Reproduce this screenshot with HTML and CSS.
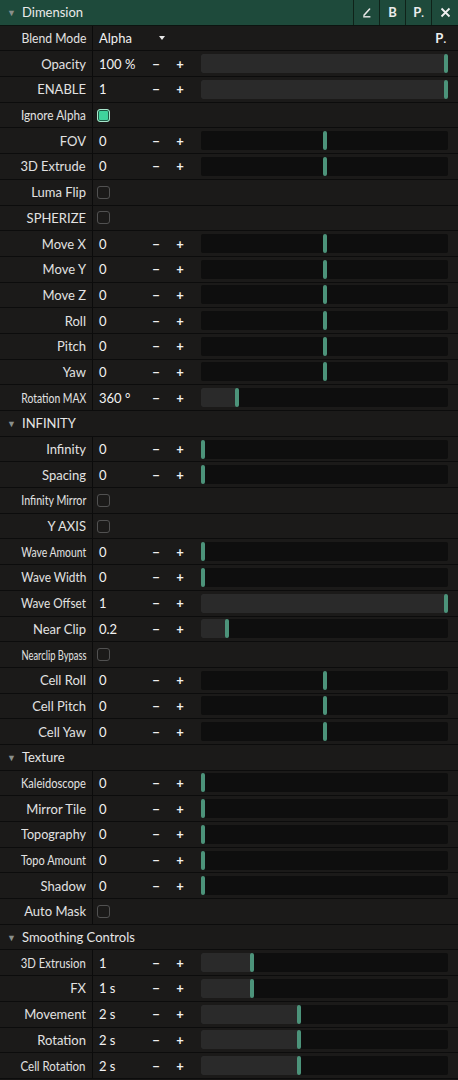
FILE: index.html
```html
<!DOCTYPE html>
<html>
<head>
<meta charset="utf-8">
<link rel="stylesheet" href="styles.css">
</head>
<body>
<div class="panel">
  <div class="hdr">
    <span class="tri">&#9660;</span><span class="hdr-title">Dimension</span>
    <div class="hbtns">
      <div class="hbtn"><svg width="12" height="12" viewBox="0 0 12 12"><path d="M3 9.2 L8.6 3" stroke="#e8e8e8" stroke-width="1.6" fill="none" stroke-linecap="round"/><path d="M2.2 10.8 H9.4" stroke="#e8e8e8" stroke-width="1.4"/></svg></div>
      <div class="hbtn">B</div>
      <div class="hbtn">P<span class="dot">.</span></div>
      <div class="hbtn"><svg width="11" height="11" viewBox="0 0 11 11"><path d="M1.5 1.5 L9.5 9.5 M9.5 1.5 L1.5 9.5" stroke="#f0f0f0" stroke-width="1.8"/></svg></div>
    </div>
  </div>

  <div class="row"><div class="lbl"><span>Blend Mode</span></div><div class="cell"><span class="v">Alpha</span><span class="dd"></span><span class="pp">P<span class="dot">.</span></span></div></div>

  <div class="row"><div class="lbl"><span>Opacity</span></div><div class="cell"><span class="v">100 %</span><span class="b">&minus;</span><span class="b">+</span><div class="trk" style="--p:1"><div class="fill"></div><div class="hdl"></div></div></div></div>
  <div class="row"><div class="lbl"><span>ENABLE</span></div><div class="cell"><span class="v">1</span><span class="b">&minus;</span><span class="b">+</span><div class="trk" style="--p:1"><div class="fill"></div><div class="hdl"></div></div></div></div>
  <div class="row"><div class="lbl"><span>Ignore Alpha</span></div><div class="cell"><span class="cb on"></span></div></div>
  <div class="row"><div class="lbl"><span>FOV</span></div><div class="cell"><span class="v">0</span><span class="b">&minus;</span><span class="b">+</span><div class="trk bi" style="--p:0.5"><div class="hdl"></div></div></div></div>
  <div class="row"><div class="lbl"><span>3D Extrude</span></div><div class="cell"><span class="v">0</span><span class="b">&minus;</span><span class="b">+</span><div class="trk bi" style="--p:0.5"><div class="hdl"></div></div></div></div>
  <div class="row"><div class="lbl"><span>Luma Flip</span></div><div class="cell"><span class="cb"></span></div></div>
  <div class="row"><div class="lbl"><span>SPHERIZE</span></div><div class="cell"><span class="cb"></span></div></div>
  <div class="row"><div class="lbl"><span>Move X</span></div><div class="cell"><span class="v">0</span><span class="b">&minus;</span><span class="b">+</span><div class="trk bi" style="--p:0.5"><div class="hdl"></div></div></div></div>
  <div class="row"><div class="lbl"><span>Move Y</span></div><div class="cell"><span class="v">0</span><span class="b">&minus;</span><span class="b">+</span><div class="trk bi" style="--p:0.5"><div class="hdl"></div></div></div></div>
  <div class="row"><div class="lbl"><span>Move Z</span></div><div class="cell"><span class="v">0</span><span class="b">&minus;</span><span class="b">+</span><div class="trk bi" style="--p:0.5"><div class="hdl"></div></div></div></div>
  <div class="row"><div class="lbl"><span>Roll</span></div><div class="cell"><span class="v">0</span><span class="b">&minus;</span><span class="b">+</span><div class="trk bi" style="--p:0.5"><div class="hdl"></div></div></div></div>
  <div class="row"><div class="lbl"><span>Pitch</span></div><div class="cell"><span class="v">0</span><span class="b">&minus;</span><span class="b">+</span><div class="trk bi" style="--p:0.5"><div class="hdl"></div></div></div></div>
  <div class="row"><div class="lbl"><span>Yaw</span></div><div class="cell"><span class="v">0</span><span class="b">&minus;</span><span class="b">+</span><div class="trk bi" style="--p:0.5"><div class="hdl"></div></div></div></div>
  <div class="row"><div class="lbl"><span>Rotation MAX</span></div><div class="cell"><span class="v">360 &deg;</span><span class="b">&minus;</span><span class="b">+</span><div class="trk" style="--p:0.14"><div class="fill"></div><div class="hdl"></div></div></div></div>

  <div class="sec"><span class="tri">&#9660;</span>INFINITY</div>
  <div class="row"><div class="lbl"><span>Infinity</span></div><div class="cell"><span class="v">0</span><span class="b">&minus;</span><span class="b">+</span><div class="trk" style="--p:0"><div class="fill"></div><div class="hdl"></div></div></div></div>
  <div class="row"><div class="lbl"><span>Spacing</span></div><div class="cell"><span class="v">0</span><span class="b">&minus;</span><span class="b">+</span><div class="trk" style="--p:0"><div class="fill"></div><div class="hdl"></div></div></div></div>
  <div class="row"><div class="lbl"><span>Infinity Mirror</span></div><div class="cell"><span class="cb"></span></div></div>
  <div class="row"><div class="lbl"><span>Y AXIS</span></div><div class="cell"><span class="cb"></span></div></div>
  <div class="row"><div class="lbl"><span>Wave Amount</span></div><div class="cell"><span class="v">0</span><span class="b">&minus;</span><span class="b">+</span><div class="trk" style="--p:0"><div class="fill"></div><div class="hdl"></div></div></div></div>
  <div class="row"><div class="lbl"><span>Wave Width</span></div><div class="cell"><span class="v">0</span><span class="b">&minus;</span><span class="b">+</span><div class="trk" style="--p:0"><div class="fill"></div><div class="hdl"></div></div></div></div>
  <div class="row"><div class="lbl"><span>Wave Offset</span></div><div class="cell"><span class="v">1</span><span class="b">&minus;</span><span class="b">+</span><div class="trk" style="--p:1"><div class="fill"></div><div class="hdl"></div></div></div></div>
  <div class="row"><div class="lbl"><span>Near Clip</span></div><div class="cell"><span class="v">0.2</span><span class="b">&minus;</span><span class="b">+</span><div class="trk" style="--p:0.1"><div class="fill"></div><div class="hdl"></div></div></div></div>
  <div class="row"><div class="lbl"><span>Nearclip Bypass</span></div><div class="cell"><span class="cb"></span></div></div>
  <div class="row"><div class="lbl"><span>Cell Roll</span></div><div class="cell"><span class="v">0</span><span class="b">&minus;</span><span class="b">+</span><div class="trk bi" style="--p:0.5"><div class="hdl"></div></div></div></div>
  <div class="row"><div class="lbl"><span>Cell Pitch</span></div><div class="cell"><span class="v">0</span><span class="b">&minus;</span><span class="b">+</span><div class="trk bi" style="--p:0.5"><div class="hdl"></div></div></div></div>
  <div class="row"><div class="lbl"><span>Cell Yaw</span></div><div class="cell"><span class="v">0</span><span class="b">&minus;</span><span class="b">+</span><div class="trk bi" style="--p:0.5"><div class="hdl"></div></div></div></div>

  <div class="sec"><span class="tri">&#9660;</span>Texture</div>
  <div class="row"><div class="lbl"><span>Kaleidoscope</span></div><div class="cell"><span class="v">0</span><span class="b">&minus;</span><span class="b">+</span><div class="trk" style="--p:0"><div class="fill"></div><div class="hdl"></div></div></div></div>
  <div class="row"><div class="lbl"><span>Mirror Tile</span></div><div class="cell"><span class="v">0</span><span class="b">&minus;</span><span class="b">+</span><div class="trk" style="--p:0"><div class="fill"></div><div class="hdl"></div></div></div></div>
  <div class="row"><div class="lbl"><span>Topography</span></div><div class="cell"><span class="v">0</span><span class="b">&minus;</span><span class="b">+</span><div class="trk" style="--p:0"><div class="fill"></div><div class="hdl"></div></div></div></div>
  <div class="row"><div class="lbl"><span>Topo Amount</span></div><div class="cell"><span class="v">0</span><span class="b">&minus;</span><span class="b">+</span><div class="trk" style="--p:0"><div class="fill"></div><div class="hdl"></div></div></div></div>
  <div class="row"><div class="lbl"><span>Shadow</span></div><div class="cell"><span class="v">0</span><span class="b">&minus;</span><span class="b">+</span><div class="trk" style="--p:0"><div class="fill"></div><div class="hdl"></div></div></div></div>
  <div class="row"><div class="lbl"><span>Auto Mask</span></div><div class="cell"><span class="cb"></span></div></div>

  <div class="sec"><span class="tri">&#9660;</span>Smoothing Controls</div>
  <div class="row"><div class="lbl"><span>3D Extrusion</span></div><div class="cell"><span class="v">1</span><span class="b">&minus;</span><span class="b">+</span><div class="trk" style="--p:0.2"><div class="fill"></div><div class="hdl"></div></div></div></div>
  <div class="row"><div class="lbl"><span>FX</span></div><div class="cell"><span class="v">1 s</span><span class="b">&minus;</span><span class="b">+</span><div class="trk" style="--p:0.2"><div class="fill"></div><div class="hdl"></div></div></div></div>
  <div class="row"><div class="lbl"><span>Movement</span></div><div class="cell"><span class="v">2 s</span><span class="b">&minus;</span><span class="b">+</span><div class="trk" style="--p:0.395"><div class="fill"></div><div class="hdl"></div></div></div></div>
  <div class="row"><div class="lbl"><span>Rotation</span></div><div class="cell"><span class="v">2 s</span><span class="b">&minus;</span><span class="b">+</span><div class="trk" style="--p:0.395"><div class="fill"></div><div class="hdl"></div></div></div></div>
  <div class="row"><div class="lbl"><span>Cell Rotation</span></div><div class="cell"><span class="v">2 s</span><span class="b">&minus;</span><span class="b">+</span><div class="trk" style="--p:0.395"><div class="fill"></div><div class="hdl"></div></div></div></div>
</div>
<script src="script.js"></script>
</body>
</html>
```

FILE: styles.css
```css
* { box-sizing: border-box; }
html, body { margin: 0; padding: 0; background: #171615; }
body {
  font-family: Lato, "Liberation Sans", sans-serif;
  font-size: 13px;
  color: #e4e4e4;
  width: 458px;
  height: 1080px;
  overflow: hidden;
}
.panel { display: flex; flex-direction: column; }

.hdr {
  height: 25.7px;
  background: #1e4a3b;
  border-bottom: 1px solid #0c1410;
  display: flex;
  align-items: center;
}
.tri {
  font-size: 9px;
  color: #8a8f8c;
  width: 22px;
  padding-left: 7px;
  display: inline-block;
}
.hdr-title { flex: 1; color: #eaeaea; }
.hbtns { display: flex; height: 100%; }
.hbtn {
  width: 26px;
  height: 100%;
  border-left: 1px solid #0f2219;
  display: flex;
  align-items: center;
  justify-content: center;
  font-weight: bold;
  font-size: 13px;
  color: #ececec;
}
.hbtn:last-child { width: 27px; }
.dot { font-size: 11px; }

.row {
  height: 25.7px;
  display: flex;
  border-bottom: 1px solid #0c0c0c;
  background: #1b1a19;
}
.lbl {
  width: 93px;
  border-right: 1px solid #0b0b0b;
  display: flex;
  align-items: center;
  justify-content: flex-end;
  padding-right: 6px;
  white-space: nowrap;
  color: #e2e2e2;
}
.lbl span { display: inline-block; transform-origin: right center; }
.cell {
  flex: 1;
  display: flex;
  align-items: center;
  padding-left: 6px;
  padding-right: 10px;
}
.v { width: 45px; color: #f2f2f2; white-space: nowrap; }
.b {
  width: 24px;
  text-align: center;
  font-weight: bold;
  color: #f0f0f0;
}
.trk {
  flex: 1;
  margin-left: 9px;
  height: 19px;
  background: #0e0e0e;
  border-radius: 2px;
  position: relative;
}
.fill {
  position: absolute;
  left: 0; top: 0; bottom: 0;
  width: calc(var(--p) * (100% - 4px) + 2px);
  background: #2a2a2a;
  border-radius: 2px 0 0 2px;
}
.hdl {
  position: absolute;
  top: 0;
  width: 4px;
  height: 19px;
  left: calc(var(--p) * (100% - 4px));
  background: #4c937a;
  border-radius: 2px;
}
.dd {
  width: 0; height: 0;
  margin-left: 15px;
  border-left: 3.5px solid transparent;
  border-right: 3.5px solid transparent;
  border-top: 4px solid #e8e8e8;
}
.pp {
  margin-left: auto;
  margin-right: 2px;
  font-weight: bold;
  color: #eeeeee;
}
.cb {
  width: 13px;
  height: 13px;
  margin-left: -2px;
  border: 1.5px solid #515151;
  border-radius: 3px;
  display: inline-block;
}
.cb.on {
  border: 1.5px solid #a8e6cc;
  background: #3fd39c;
  box-shadow: inset 0 0 0 1px #1d5a44;
}
.sec {
  height: 25.7px;
  display: flex;
  align-items: center;
  border-bottom: 1px solid #0c0c0c;
  background: #1b1a19;
  color: #e6e6e6;
}
```

FILE: script.js
```js
document.querySelectorAll('.lbl span').forEach(function (s) {
  var w = s.getBoundingClientRect().width;
  var max = 65;
  if (w > max) s.style.transform = 'scaleX(' + (max / w) + ')';
});
```
